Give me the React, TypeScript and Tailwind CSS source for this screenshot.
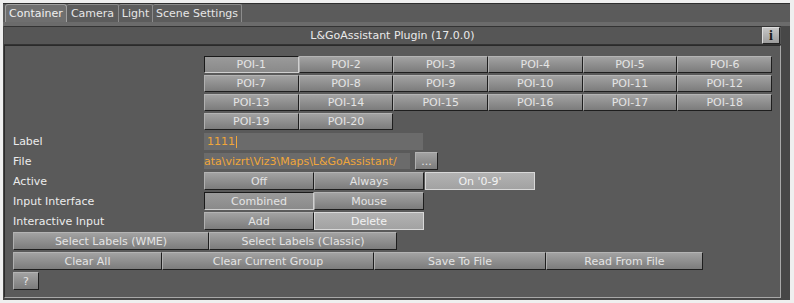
import React from "react";

type Variant = "normal" | "pressed" | "light";

function Btn({
  children,
  w,
  variant = "normal",
  className = "",
}: {
  children: React.ReactNode;
  w?: string;
  variant?: Variant;
  className?: string;
}) {
  const base =
    "h-full flex items-center justify-center whitespace-nowrap border leading-none text-[#e4e4e4] ";
  const v =
    variant === "normal"
      ? "bg-gradient-to-b from-[#a2a2a2] to-[#7c7c7c] border-t-[#b4b4b4] border-l-[#b0b0b0] border-b-[#1e1e1e] border-r-[#1e1e1e]"
      : variant === "pressed"
      ? "bg-gradient-to-b from-[#9a9a9a] to-[#8a8a8a] border-t-[#1a1a1a] border-l-[#1a1a1a] border-b-[#d0d0d0] border-r-[#d0d0d0]"
      : "bg-gradient-to-b from-[#b2b2b2] to-[#a2a2a2] border-t-[#d8d8d8] border-l-[#d8d8d8] border-b-[#d8d8d8] border-r-[#d8d8d8] text-[#f2f2f2]";
  return <div className={`${base} ${v} ${w ?? ""} ${className}`}>{children}</div>;
}

function Row({ label, children, h = "h-[18px]" }: { label?: string; children: React.ReactNode; h?: string }) {
  return (
    <div className={`flex items-center ${h}`}>
      <div className="w-[191px] shrink-0 text-[#ececec] leading-none">{label}</div>
      {children}
    </div>
  );
}

export default function App() {
  const pois = Array.from({ length: 20 }, (_, i) => `POI-${i + 1}`);
  return (
    <div
      className="w-[794px] h-[303px] bg-[#efefef] overflow-hidden text-[11px]"
      style={{ fontFamily: '"DejaVu Sans", Verdana, sans-serif' }}
    >
      <div className="ml-[3px] mt-[3px] w-[787px] h-[297px] bg-[#474747] flex flex-col">
        {/* tab bar */}
        <div className="h-[19px] bg-[#5b5b5b] border-t border-[#2e2e2e] flex items-end pl-[2px]">
          <div className="w-[62px] h-[18px] bg-[#6f6f6f] border-t border-l border-r border-[#a0a0a0] rounded-t-[3px] flex items-center justify-center text-[#f0f0f0] leading-none">
            Container
          </div>
          <div className="w-[52px] h-[18px] bg-[#5c5c5c] border-t border-r border-[#8c8c8c] rounded-t-[2px] flex items-center justify-center text-[#e6e6e6] leading-none">
            Camera
          </div>
          <div className="w-[34px] h-[18px] bg-[#5c5c5c] border-t border-r border-[#8c8c8c] rounded-t-[2px] flex items-center justify-center text-[#e6e6e6] leading-none">
            Light
          </div>
          <div className="w-[89px] h-[18px] bg-[#5c5c5c] border-t border-r border-[#8c8c8c] rounded-t-[2px] flex items-center justify-center text-[#e6e6e6] leading-none">
            Scene Settings
          </div>
        </div>
        <div className="h-[4px] bg-[#6b6b6b]" />
        {/* panel */}
        <div className="ml-[1px] w-[777px] flex flex-col">
          {/* header */}
          <div className="h-[19px] bg-[#565656] border-t border-b border-[#333333] flex items-center relative">
            <div className="flex-1 text-center text-[#eaeaea] leading-none">L&amp;GoAssistant Plugin (17.0.0)</div>
            <div className="absolute right-[1px] top-[0px] w-[18px] h-[17px] bg-gradient-to-b from-[#c6c6c6] to-[#9c9c9c] border border-t-[#dddddd] border-l-[#dddddd] border-b-[#222222] border-r-[#222222] flex items-center justify-center">
              <span
                className="text-[#1a1a1a] text-[14px] font-bold leading-none"
                style={{ fontFamily: '"Liberation Serif", serif' }}
              >
                i
              </span>
            </div>
          </div>
          {/* body */}
          <div className="h-[253px] bg-[#5a5a5a] border-t border-l border-[#2a2a2a] border-r-[#a8a8a8] border-b-[#a8a8a8] border-r border-b pl-[8px] pt-[10px] flex flex-col">
            <div className="ml-[191px] w-[568px] grid grid-cols-6 gap-y-[2px]">
              {pois.map((p, i) => (
                <div key={p} className="h-[17px]">
                  <Btn variant={i === 0 ? "pressed" : "normal"}>{p}</Btn>
                </div>
              ))}
            </div>
            <div className="flex flex-col gap-[2px] mt-[3px]">
              <Row label="Label" h="h-[17px]">
                <div className="w-[219px] h-full bg-[#6b6b6b] flex items-center pl-[3px] text-[#f0a63a] leading-none">
                  1111<span className="inline-block w-[1px] h-[12px] bg-[#f0a63a] ml-[1px]" />
                </div>
              </Row>
              <Row label="File">
                <div className="w-[206px] h-[16px] bg-[#6b6b6b] flex items-center text-[#f0a63a] leading-none overflow-hidden whitespace-nowrap">
                  ata\vizrt\Viz3\Maps\L&amp;GoAssistant/
                </div>
                <div className="ml-[5px] w-[23px] h-[18px]">
                  <Btn>...</Btn>
                </div>
              </Row>
              <Row label="Active">
                <Btn w="w-[110px]">Off</Btn>
                <Btn w="w-[110px]">Always</Btn>
                <Btn w="w-[110px]" variant="light" className="ml-[1px]">
                  On '0-9'
                </Btn>
              </Row>
              <Row label="Input Interface">
                <Btn w="w-[110px]" variant="pressed">
                  Combined
                </Btn>
                <Btn w="w-[110px]">Mouse</Btn>
              </Row>
              <Row label="Interactive Input">
                <Btn w="w-[110px]">Add</Btn>
                <Btn w="w-[110px]" variant="light">
                  Delete
                </Btn>
              </Row>
              <div className="flex h-[18px]">
                <Btn w="w-[196px]">Select Labels (WME)</Btn>
                <Btn w="w-[188px]">Select Labels (Classic)</Btn>
              </div>
              <div className="flex h-[18px]">
                <Btn w="w-[149px]">Clear All</Btn>
                <Btn w="w-[212px]">Clear Current Group</Btn>
                <Btn w="w-[172px]">Save To File</Btn>
                <Btn w="w-[157px]">Read From File</Btn>
              </div>
              <div className="flex h-[18px]">
                <Btn w="w-[26px]">?</Btn>
              </div>
            </div>
          </div>
        </div>
      </div>
    </div>
  );
}
